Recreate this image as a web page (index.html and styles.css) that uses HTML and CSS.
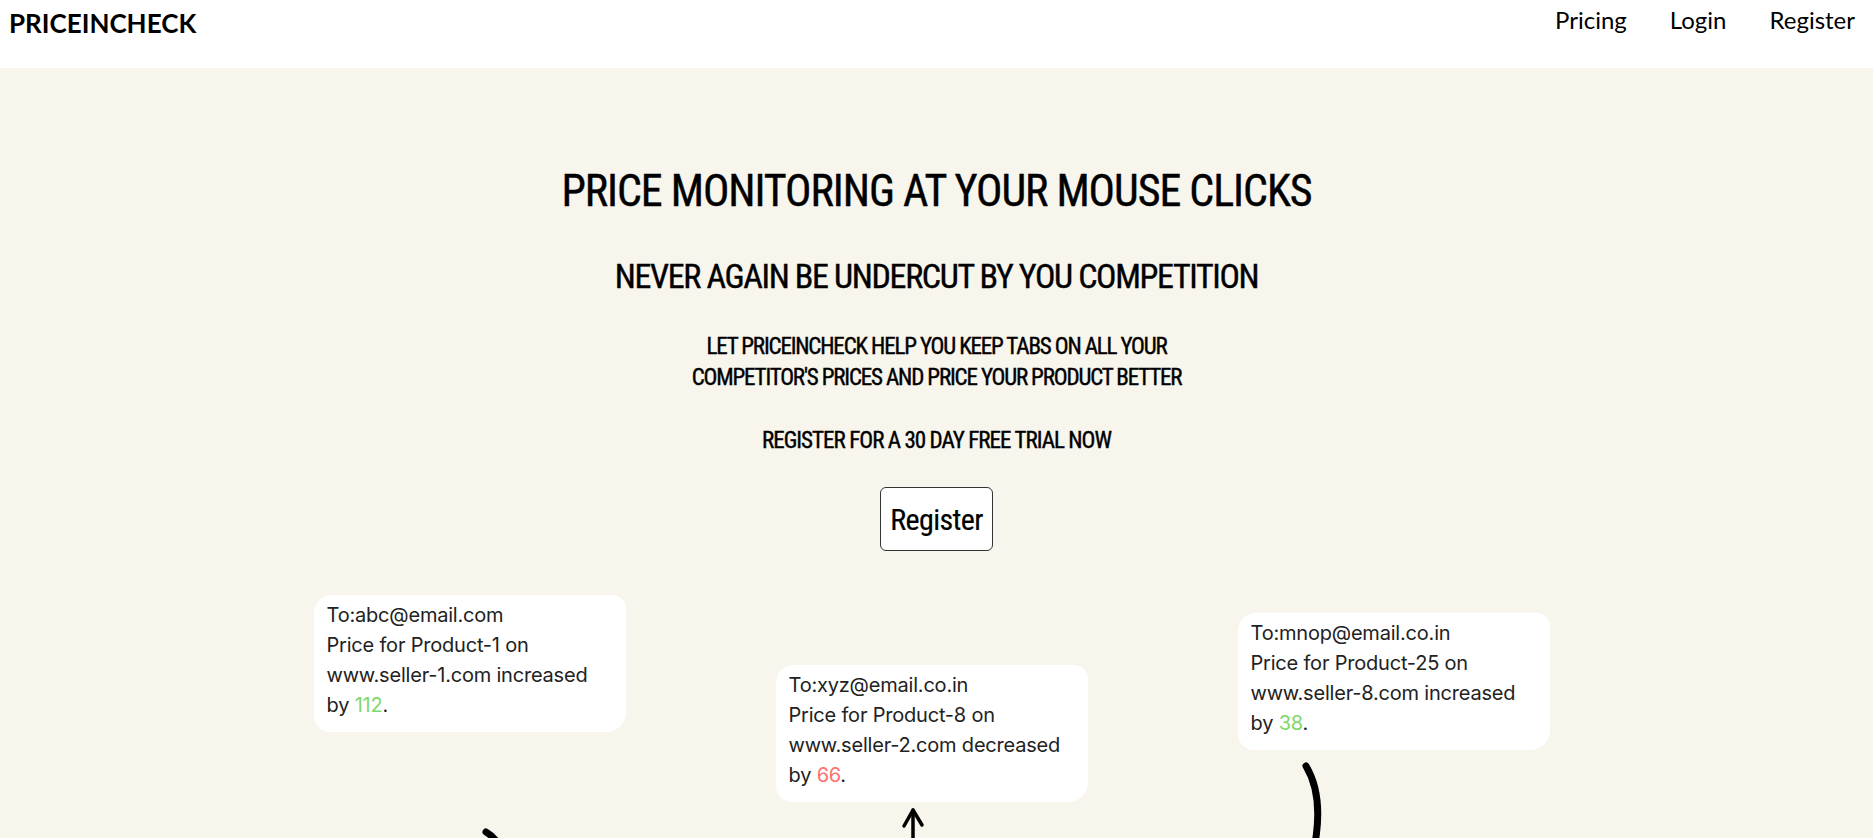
FILE: index.html
```html
<!DOCTYPE html>
<html lang="en">
<head>
  <meta charset="UTF-8">
  <meta name="viewport" content="width=device-width, initial-scale=1.0">
  <title>PriceInCheck</title>
  <link rel="stylesheet" href="styles.css">
</head>
<body>
  <!-- Navigasi atas -->
  <header class="topbar">
    <a class="logo" href="#">PRICEINCHECK</a>
    <nav class="menu">
      <a href="#">Pricing</a>
      <a href="#">Login</a>
      <a href="#">Register</a>
    </nav>
  </header>

  <!-- Hero -->
  <section class="hero">
    <h1>PRICE MONITORING AT YOUR MOUSE CLICKS</h1>
    <h2>NEVER AGAIN BE UNDERCUT BY YOU COMPETITION</h2>
    <p class="lead">LET PRICEINCHECK HELP YOU KEEP TABS ON ALL YOUR<br>COMPETITOR'S PRICES AND PRICE YOUR PRODUCT BETTER</p>
    <p class="trial">REGISTER FOR A 30 DAY FREE TRIAL NOW</p>
    <button class="register-btn">Register</button>
  </section>

  <!-- Contoh notifikasi -->
  <section class="samples">
    <div class="sample">
      <div class="mail">
        To:abc@email.com<br>
        Price for Product-1 on<br>
        www.seller-1.com increased<br>
        by <span class="up">112</span>.
      </div>
      <svg class="arrow" width="312" height="120" viewBox="0 0 312 120">
        <path d="M172 100 C179 104 186 112 190 124" fill="none" stroke="#000" stroke-width="7" stroke-linecap="round"/>
      </svg>
    </div>

    <div class="sample sample-low">
      <div class="mail">
        To:xyz@email.co.in<br>
        Price for Product-8 on<br>
        www.seller-2.com decreased<br>
        by <span class="down">66</span>.
      </div>
      <svg class="arrow" width="312" height="60" viewBox="0 0 312 60">
        <path d="M137 8 L137 60" fill="none" stroke="#000" stroke-width="3.5" stroke-linecap="round"/>
        <path d="M128 24 L137 8 L146 23" fill="none" stroke="#000" stroke-width="3.5" stroke-linecap="round" stroke-linejoin="round"/>
      </svg>
    </div>

    <div class="sample sample-mid">
      <div class="mail">
        To:mnop@email.co.in<br>
        Price for Product-25 on<br>
        www.seller-8.com increased<br>
        by <span class="up">38</span>.
      </div>
      <svg class="arrow" width="312" height="110" viewBox="0 0 312 110">
        <path d="M68 16 C80 36 84 66 74 108" fill="none" stroke="#000" stroke-width="7" stroke-linecap="round"/>
      </svg>
    </div>
  </section>
</body>
</html>
```

FILE: styles.css
```css
/* Dasar */
body {
  margin: 0;
  background-color: #f8f5ed;
  color: #000;
}

/* Header */
.topbar {
  display: flex;
  justify-content: space-between;
  align-items: flex-start;
  height: 68px;
  padding: 0 18px 0 9px;
  background-color: #fff;
  font-family: 'Lato', sans-serif;
}

.logo {
  margin-top: 7px;
  font-size: 26px;
  font-weight: bold;
  color: #000;
  text-decoration: none;
}

.menu {
  display: flex;
  gap: 43px;
  margin-top: 5px;
}

.menu a {
  font-size: 24px;
  color: #000;
  text-decoration: none;
}

/* Hero */
.hero {
  display: flex;
  flex-direction: column;
  align-items: center;
  padding-top: 97px;
  font-family: 'Liberation Sans Narrow', 'Roboto Condensed', sans-serif;
  font-stretch: condensed;
  text-align: center;
  -webkit-text-stroke: 0.4px #000;
}

.hero h1 {
  margin: 0;
  font-size: 44px;
  line-height: 52px;
  font-weight: normal;
  letter-spacing: -1.05px;
}

.hero h2 {
  margin: 39px 0 0;
  font-size: 34px;
  line-height: 40px;
  font-weight: normal;
  letter-spacing: -1.35px;
}

.hero p {
  margin: 0;
  font-size: 23px;
  line-height: 31px;
}

.hero .lead {
  margin-top: 35px;
  letter-spacing: -1.15px;
}

.hero .trial {
  margin-top: 32px;
  letter-spacing: -0.95px;
}

.register-btn {
  margin-top: 31px;
  width: 113px;
  height: 64px;
  background-color: #fff;
  border: 1px solid #333;
  border-radius: 6px;
  font-family: inherit;
  font-size: 30px;
  letter-spacing: -0.6px;
  color: #000;
  cursor: pointer;
  -webkit-text-stroke: 0.2px #000;
}

/* Kartu notifikasi */
.samples {
  display: flex;
  justify-content: center;
  align-items: flex-start;
  gap: 150px;
  margin-top: 44px;
  padding-right: 10px;
  font-family: 'Inter', sans-serif;
}

.sample {
  display: flex;
  flex-direction: column;
  width: 312px;
}

.sample-low {
  margin-top: 70px;
}

.sample-mid {
  margin-top: 18px;
}

.mail {
  padding: 5px 12px 12px 13px;
  background-color: #fff;
  border-radius: 18px 14px 20px 16px;
  font-size: 20px;
  line-height: 30px;
  letter-spacing: -0.2px;
  color: #222;
}

.up {
  color: #7ed86b;
}

.down {
  color: #ff6f6f;
}

.arrow {
  display: block;
}
```
